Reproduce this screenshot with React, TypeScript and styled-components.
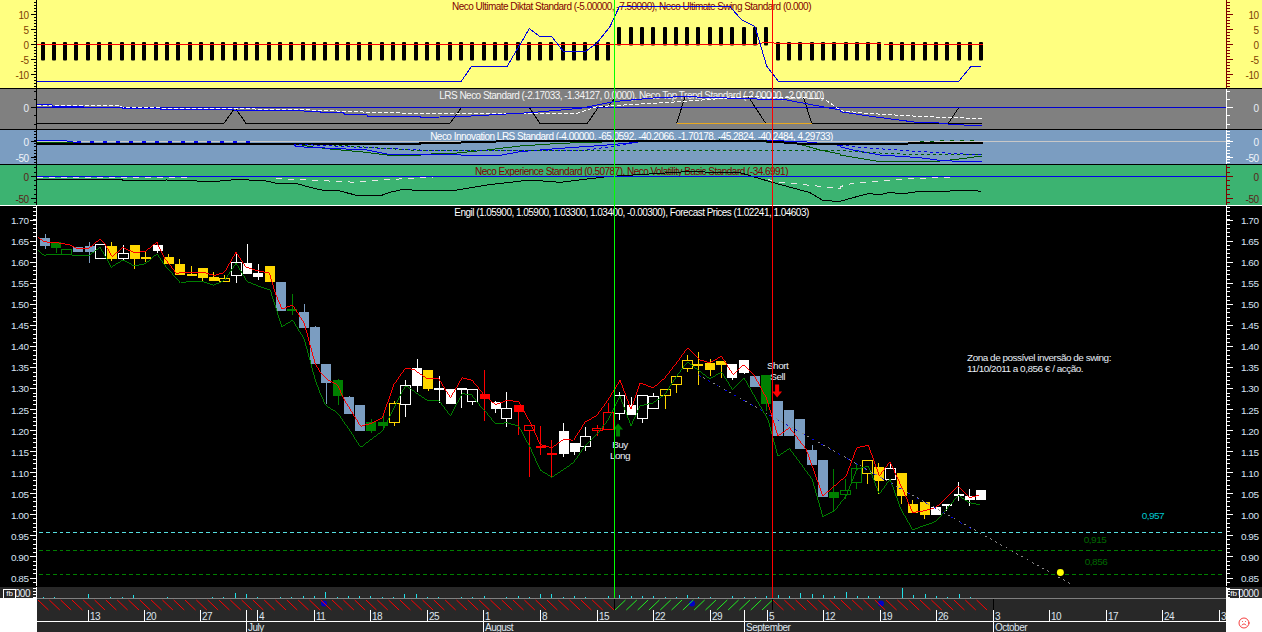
import React from "react";
import styled, { createGlobalStyle } from "styled-components";
import { Frown } from "lucide-react";

const YELLOW = "#ffff80";
const GRAY = "#808080";
const STEEL = "#7b9dc1";
const SEA = "#3cb371";
const GOLD = "#ffd700";
const DARK = "#282828";
const MAROON = "#800000";

const GlobalStyle = createGlobalStyle`
  html, body {
    margin: 0;
    padding: 0;
    background: #fff;
    overflow: hidden;
  }
  body {
    font-family: "Liberation Sans", Arial, sans-serif;
  }
`;

const Screen = styled.div`
  position: relative;
  width: 1262px;
  height: 632px;
  overflow: hidden;
`;

const Panel = styled.section<{ $height: number; $bg: string; $rule: string }>`
  display: grid;
  grid-template-columns: 37px 1189px 36px;
  box-sizing: border-box;
  height: ${(p) => p.$height}px;
  background: ${(p) => p.$bg};
  border-bottom: 1px solid ${(p) => p.$rule};
`;

const Plot = styled.div`
  position: relative;
  overflow: hidden;
`;

const Title = styled.div<{ $color: string }>`
  position: absolute;
  top: 1px;
  left: 0;
  right: 0;
  font-size: 10px;
  letter-spacing: -0.52px;
  line-height: 11px;
  text-align: center;
  white-space: nowrap;
  color: ${(p) => p.$color};
`;

const Canvas = styled.svg`
  position: relative;
  display: block;
  width: 100%;
  height: 100%;

  text {
    font-family: "Liberation Sans", Arial, sans-serif;
    font-size: 10px;
    letter-spacing: -0.5px;
  }
`;

const VLine = styled.div<{ $x: number; $color: string }>`
  position: absolute;
  top: 0;
  left: ${(p) => p.$x}px;
  width: 1px;
  height: 598px;
  background: ${(p) => p.$color};
`;

const VolumeRow = styled.div`
  display: grid;
  grid-template-columns: 37px 1189px 36px;
  height: 11px;
  background: ${DARK};
`;

const Gutter = styled.div`
  position: relative;
  overflow: hidden;
`;

const TinyBox = styled.span<{ $left: number }>`
  position: absolute;
  top: 2px;
  left: ${(p) => p.$left}px;
  width: 11px;
  height: 9px;
  border: 1px solid #fff;
  border-bottom: none;
  color: #fff;
  font-size: 8px;
  line-height: 8px;
  text-align: center;
`;

const TimeRow = styled.div`
  display: grid;
  grid-template-columns: 37px 1189px 36px;
  height: 34px;
  background: #fff;
`;

const TimePlot = styled.div`
  background: ${DARK};
`;

const SmileyCell = styled.div`
  display: flex;
  align-items: flex-end;
  justify-content: center;
  padding-bottom: 3px;
  color: #f00000;
`;

const trace = (ox: number, oy: number, ...v: number[]) => {
  const out: string[] = [];
  for (let n = 0; n < v.length; n += 2) out.push(`${ox + v[n] / 3},${oy + v[n + 1] / 3}`);
  return out.join(" ");
};

const barX = (i: number) => 42.5 + 11.31 * i;

type Tick = { y: number; label?: string };

const makeTicks = (from: number, to: number, start: number, step: number, majors: Tick[]) => {
  const minors: number[] = [];
  for (let y = start; y <= to; y += step) if (y >= from) minors.push(Math.floor(y) + 0.5);
  return { minors, majors };
};

const ValueAxis = ({
  side,
  top,
  height,
  line,
  ink,
  ticks,
}: {
  side: "left" | "right";
  top: number;
  height: number;
  line: string;
  ink: string;
  ticks: { minors: number[]; majors: Tick[] };
}) => {
  const left = side === "left";
  const base = left ? 36.5 : 1226.5;
  const dir = left ? -1 : 1;
  return (
    <Canvas viewBox={`${left ? 0 : 1226} ${top} ${left ? 37 : 36} ${height}`} shapeRendering="crispEdges">
      <line x1={base} x2={base} y1={top} y2={top + height} stroke={line} />
      {ticks.minors.map((y) => (
        <line key={y} x1={base} x2={base + dir * 3} y1={y} y2={y} stroke={line} />
      ))}
      {ticks.majors.map((t) => (
        <line key={t.y} x1={base} x2={base + dir * 6} y1={t.y} y2={t.y} stroke={line} />
      ))}
      {ticks.majors.map((t) => (
        <text key={t.y} x={left ? 28.5 : 1258.5} y={t.y + 4} fill={ink} textAnchor="end">
          {t.label}
        </text>
      ))}
    </Canvas>
  );
};

const ultimateBars = Array.from({ length: 84 }, (_, i) => i);
const swingLine = [
  trace(0, 0, 110, 244),
  trace(420, 0, 124, 244, 155, 198, 262, 198, 328, 86, 358, 108, 394, 108, 430, 154, 497, 154, 530, 130, 570, 80, 598, 20, 930, 20, 965, 60, 1005, 80, 1040, 198, 1075, 244),
  trace(840, 0, 356, 244, 392, 200, 422, 200),
].join(" ");

const UltimatePlot = () => (
  <Canvas viewBox="37 0 1189 88">
    {ultimateBars.map((i) => {
      const up = i >= 51 && i <= 64;
      return <rect key={i} x={Math.round(barX(i)) - 2} y={up ? 27 : 42} width={4} height={18.5} rx={1} fill="#000" />;
    })}
    <polyline
      points="37,44.5 756,44.5 762,43 770,42.5 778,43.5 983,44.5"
      fill="none"
      stroke="#f00"
      shapeRendering="crispEdges"
    />
    <polyline points={swingLine} fill="none" stroke="#0000e0" shapeRendering="crispEdges" />
  </Canvas>
);

const LrsPlot = () => (
  <Canvas viewBox="37 89 1189 40" fill="none" shapeRendering="crispEdges">
    <polyline
      stroke="#000"
      points={[
        trace(0, 0, 110, 370, 672, 370, 705, 323, 738, 370),
        trace(420, 0, 90, 370, 125, 322, 328, 322, 360, 370, 502, 370, 535, 322, 565, 318, 585, 295),
      ].join(" ")}
    />
    <polyline stroke="#000" points={trace(420, 0, 770, 370, 795, 290)} />
    <polyline stroke="#000" points={trace(420, 0, 985, 290, 1037, 370)} />
    <polyline stroke="#000" points={[trace(420, 0, 1150, 290, 1175, 370), trace(840, 0, 325, 370, 425, 370)].join(" ")} />
    <polyline stroke="#000" points={trace(840, 0, 325, 370, 357, 322, 425, 322)} />
    <line x1={37} x2={1226} y1={107.5} y2={107.5} stroke="#0000d0" />
    <line x1={677} x2={812} y1={123.5} y2={123.5} stroke="#e8a820" />
    <polyline
      stroke="#fff"
      strokeDasharray="4 2"
      points={[
        trace(0, 0, 110, 316, 350, 316, 370, 323, 690, 326, 910, 329, 1140, 338, 1260, 340),
        trace(420, 0, 0, 340, 470, 340, 530, 320, 780, 305, 980, 290, 1210, 295, 1260, 330),
        trace(840, 0, 0, 332, 80, 340, 200, 347, 320, 353, 425, 355),
      ].join(" ")}
    />
    <polyline
      stroke="#0000f0"
      points={[
        trace(0, 0, 110, 314, 155, 314, 158, 318, 250, 318, 253, 322, 365, 322, 368, 325, 480, 325, 483, 328, 700, 328, 703, 331, 910, 331, 913, 335, 960, 335, 963, 338, 1030, 338, 1033, 342, 1100, 342, 1103, 349, 1260, 349),
        trace(420, 0, 0, 352, 120, 350, 330, 338, 480, 325, 580, 305, 720, 292, 800, 290, 1100, 300, 1260, 330),
        trace(840, 0, 0, 335, 100, 350, 230, 367, 280, 367, 325, 372, 370, 372, 372, 375, 425, 377),
      ].join(" ")}
    />
  </Canvas>
);

const InnovationPlot = () => (
  <Canvas viewBox="37 130 1189 34" fill="none" shapeRendering="crispEdges">
    <line x1={37} x2={1226} y1={141.5} y2={141.5} stroke="#c8c8c8" />
    <polyline
      stroke="#005a00"
      points={[
        trace(0, 0, 110, 428, 560, 432, 880, 430, 930, 440, 1000, 448, 1090, 456, 1170, 466, 1260, 466),
        trace(420, 0, 0, 463, 100, 460, 200, 450, 300, 438, 420, 430, 580, 425, 900, 420, 1130, 430, 1200, 450, 1260, 462),
        trace(840, 0, 0, 465, 60, 475, 120, 485, 280, 485, 350, 478, 425, 468),
      ].join(" ")}
    />
    <polyline
      stroke="#0000e8"
      points={[
        trace(0, 0, 560, 432, 570, 434, 880, 434, 890, 440, 1100, 450, 1170, 464, 1260, 464),
        trace(420, 0, 0, 464, 240, 466, 300, 455, 420, 445, 550, 436, 640, 428, 680, 420, 1000, 420, 1150, 425, 1260, 436),
        trace(840, 0, 0, 440, 40, 450, 120, 465, 240, 473, 290, 480, 350, 484, 425, 485),
      ].join(" ")}
    />
    <polyline stroke="#0000e8" points={trace(0, 0, 110, 421, 200, 423, 230, 428)} />
    <polyline stroke="#0000e8" strokeWidth={2} strokeDasharray="4 9" points={trace(0, 0, 230, 427, 760, 427)} />
    <polyline
      stroke="#000"
      strokeWidth={2}
      points={[
        trace(0, 0, 110, 431, 1260, 431),
        trace(420, 0, 0, 430, 105, 430, 140, 425, 700, 422, 1000, 422, 1100, 428, 1150, 432),
        trace(840, 0, 0, 433, 200, 432, 210, 429, 428, 428),
      ].join(" ")}
    />
    <polyline
      stroke="#0000e8"
      strokeDasharray="3 3"
      points={[
        trace(0, 0, 880, 432, 1040, 440, 1260, 450),
        trace(420, 0, 0, 450, 500, 450, 640, 430, 660, 425),
      ].join(" ")}
    />
    <polyline stroke="#0000e8" strokeDasharray="3 3" points={trace(840, 0, 0, 435, 60, 442, 200, 452, 300, 458, 425, 465)} />
    <polyline
      stroke="#005a00"
      strokeDasharray="3 3"
      points={[trace(0, 0, 1000, 435, 1260, 452), trace(840, 0, 0, 452, 100, 458, 200, 463, 425, 465)].join(" ")}
    />
    <polyline stroke="#005a00" strokeDasharray="4 6" points={trace(840, 0, 240, 424, 410, 421)} />
  </Canvas>
);

const ExperiencePlot = () => (
  <Canvas viewBox="37 165 1189 40" fill="none" shapeRendering="crispEdges">
    <polyline
      stroke="#000"
      points={[
        trace(0, 0, 110, 539, 365, 539, 370, 541, 430, 541, 500, 540, 620, 544, 650, 544, 705, 539, 790, 541, 835, 551, 890, 551, 950, 567, 975, 572, 1015, 572, 1070, 586, 1145, 586, 1170, 577, 1210, 568, 1260, 572),
        trace(420, 0, 0, 572, 100, 572, 200, 555, 330, 540, 420, 547, 560, 530, 800, 515, 960, 518, 1060, 548, 1170, 578, 1210, 602, 1260, 604),
        trace(840, 0, 0, 604, 50, 590, 90, 580, 115, 585, 150, 577, 185, 582, 225, 576, 310, 575, 350, 571, 400, 571, 422, 574),
      ].join(" ")}
    />
    <polyline
      stroke="#e8e8e8"
      strokeDasharray="6 6"
      points={[
        trace(0, 0, 110, 533, 810, 530, 820, 535, 1070, 547, 1150, 540, 1260, 533),
        trace(420, 0, 0, 533, 60, 530, 1030, 530, 1060, 545, 1260, 565),
        trace(840, 0, 0, 560, 30, 552, 100, 545, 230, 535, 340, 531, 410, 528),
      ].join(" ")}
    />
    <line x1={37} x2={1226} y1={176.5} y2={176.5} stroke="#0000e8" />
  </Canvas>
);

// body top, body bottom, wick top, wick bottom, traced off the 3x crops
type Row = [string, number, number, number?, number?];

const candlesA: Row[] = [
  ["b", 85, 108, 72, 118], ["g", 97, 114, 97, 130], ["go", 118, 131], ["b", 112, 126], ["b", 108, 126, 97, 158],
  ["wo", 103, 145], ["y", 108, 146, 97, 152], ["wo", 130, 143, 106, 150], ["y", 105, 146, 105, 177], ["y", 141, 146, 126, 155],
  ["w", 105, 122, 105, 130], ["y", 141, 162, 133, 162], ["y", 162, 195, 148, 195], ["y", 191, 197, 168, 197], ["y", 175, 204, 175, 213],
  ["y", 201, 212, 186, 212], ["yo", 204, 212, 196, 212], ["wo", 157, 196, 133, 221], ["w", 160, 193, 102, 193], ["w", 189, 201, 162, 212],
  ["y", 168, 216], ["b", 216, 303], ["g", 297, 302, 252, 315], ["b", 306, 354, 282, 354], ["b", 351, 462, 348, 462],
];

const candlesB: Row[] = [
  ["b", 72, 129, 72, 195], ["g", 120, 168, 117, 198], ["b", 174, 225, 168, 225], ["b", 198, 276], ["g", 249, 276, 240, 282],
  ["g", 249, 261, 225, 273], ["yo", 192, 249, 186, 261], ["wo", 135, 195, 120, 234], ["w", 84, 138, 57, 156], ["y", 90, 147, 90, 153],
  ["w", 145, 147, 108, 192], ["w", 147, 195], ["w", 145, 150, 145, 207], ["wo", 147, 186, 147, 198], ["r", 162, 180, 90, 246],
  ["w", 189, 210, 186, 222], ["wo", 207, 237, 156, 264], ["r", 198, 219, 198, 288], ["ro", 258, 274, 258, 414], ["r", 322, 326, 261, 348],
  ["r", 342, 347, 303, 414], ["w", 276, 345, 252, 354], ["w", 312, 339, 312, 348], ["wo", 291, 322, 264, 336], ["ro", 267, 274, 258, 291],
  ["ro", 219, 269, 190, 269], ["wo", 165, 221, 156, 243], ["w", 198, 228, 174, 228], ["wo", 165, 237, 165, 252],
];

const candlesC: Row[] = [
  ["wo", 171, 207, 159, 207], ["yo", 147, 165, 147, 210], ["yo", 108, 132, 108, 159], ["yo", 60, 84, 45, 96], ["y", 72, 78, 36, 135],
  ["y", 69, 90, 57, 108], ["y", 63, 75, 63, 114], ["w", 72, 114, 72, 120], ["w", 60, 99, 60, 102], ["b", 108, 141],
  ["g", 105, 195, 105, 216], ["b", 186, 291], ["b", 213, 291], ["b", 240, 330], ["b", 333, 378, 318, 378],
  ["b", 363, 474], ["g", 459, 477, 390, 516], ["go", 453, 465, 420, 480], ["go", 387, 429, 375, 450], ["yo", 363, 402, 363, 435],
  ["y", 384, 426, 372, 465], ["wo", 387, 420, 375, 420], ["y", 402, 471, 402, 495], ["y", 495, 522, 483, 522], ["y", 489, 528, 489, 540],
  ["w", 504, 528], ["w", 495, 501, 495, 516], ["w", 465, 470, 429, 486], ["w", 471, 483, 450, 501], ["w", 453, 483],
];

const inks: Record<string, string> = { b: STEEL, g: "#008000", y: GOLD, w: "#fff", r: "#f00" };

const candles = [
  ...candlesA.map((r) => ({ r, oy: 210 })),
  ...candlesB.map((r) => ({ r, oy: 340 })),
  ...candlesC.map((r) => ({ r, oy: 340 })),
];

const Candle = ({ i, row, oy }: { i: number; row: Row; oy: number }) => {
  const [kind, top, bottom, wickTop = top, wickBottom = bottom] = row;
  const ink = inks[kind[0]];
  const hollow = kind.length > 1;
  const cx = Math.round(barX(i));
  const y1 = Math.round(oy + top / 3);
  const y2 = Math.round(oy + bottom / 3);
  return (
    <g>
      <line x1={cx + 0.5} x2={cx + 0.5} y1={oy + wickTop / 3} y2={oy + wickBottom / 3} stroke={ink} />
      {hollow ? (
        <rect x={cx - 4.5} y={y1 + 0.5} width={10} height={Math.max(y2 - y1, 1)} fill="#000" stroke={ink} />
      ) : (
        <rect x={cx - 4.5} y={y1} width={10} height={Math.max(y2 - y1, 2)} fill={ink} />
      )}
    </g>
  );
};

const upperBand = [
  trace(0, 210, 110, 82, 127, 96, 160, 97, 205, 105, 225, 115, 262, 116, 280, 100, 296, 88, 312, 105, 332, 140, 365, 113, 398, 128, 432, 125, 467, 97, 490, 145, 525, 190, 560, 188, 605, 187, 640, 197, 670, 188, 705, 127, 735, 172, 770, 183, 805, 190, 825, 255, 843, 298, 875, 286, 910, 340, 943, 462, 960, 490),
  trace(320, 340, 20, 120, 50, 135, 70, 180, 120, 261, 150, 252, 185, 235, 220, 135, 255, 85, 280, 90, 320, 118, 355, 118, 390, 175, 425, 115, 455, 122, 490, 165, 525, 195, 560, 183, 595, 186, 630, 250, 660, 315, 695, 325, 730, 300, 760, 303, 795, 248, 830, 228, 865, 180, 900, 122, 933, 210),
  trace(640, 340, 0, 130, 40, 145, 75, 115, 110, 70, 143, 25, 178, 60, 210, 70, 245, 50, 280, 105, 313, 75, 345, 110, 380, 175, 415, 290, 450, 265, 500, 330, 550, 470, 620, 410, 652, 325, 687, 318, 720, 410, 752, 367, 790, 450, 820, 520, 855, 515, 890, 505, 958, 440, 990, 475, 1020, 468),
].join(" ");

const lowerBand = [
  trace(0, 210, 110, 122, 127, 136, 160, 133, 205, 135, 262, 138, 296, 112, 330, 172, 365, 150, 398, 168, 432, 162, 467, 132, 490, 165, 538, 220, 568, 214, 605, 215, 638, 226, 670, 212, 705, 160, 738, 215, 770, 228, 808, 241, 843, 352, 875, 331, 910, 388, 943, 510, 960, 556),
  trace(320, 340, 15, 198, 50, 220, 85, 270, 120, 324, 185, 275, 220, 205, 255, 138, 320, 183, 355, 183, 390, 229, 425, 163, 455, 165, 490, 210, 525, 253, 560, 250, 595, 260, 630, 325, 660, 392, 695, 414, 760, 370, 795, 320, 830, 285, 865, 240, 900, 170, 933, 259),
  trace(640, 340, 0, 200, 40, 190, 75, 165, 110, 110, 143, 67, 210, 118, 245, 97, 278, 150, 313, 115, 350, 180, 385, 240, 415, 350, 450, 328, 518, 420, 550, 533, 585, 515, 620, 470, 652, 390, 687, 380, 720, 465, 752, 420, 785, 510, 820, 572, 890, 547, 958, 468, 990, 490, 1022, 497),
].join(" ");

const Note = ({ x, y, anchor, ink = "#e8eef6", children }: { x: number; y: number; anchor?: "middle"; ink?: string; children: string }) => (
  <text x={x} y={y} fill={ink} textAnchor={anchor}>
    {children}
  </text>
);

const PricePlot = () => (
  <Canvas viewBox="37 206 1189 381" fill="none">
    <g shapeRendering="crispEdges">
      {candles.map((c, i) => (
        <Candle key={i} i={i} row={c.r} oy={c.oy} />
      ))}
      <polyline points={lowerBand} stroke="#008000" />
      <polyline points={upperBand} stroke="#f00" />
      <line x1={698} y1={375} x2={1072} y2={585} stroke="#8a8a8a" strokeDasharray="2 4" />
      <line x1={699.5} y1={376} x2={975} y2={531} stroke="#0000e8" strokeDasharray="2 8" />
      <line x1={37} x2={1226} y1={533.5} y2={533.5} stroke="#55dfe0" strokeDasharray="4 3" />
      <line x1={37} x2={1226} y1={551.5} y2={551.5} stroke="#008000" strokeDasharray="4 3" />
      <line x1={37} x2={1226} y1={575.5} y2={575.5} stroke="#008000" strokeDasharray="4 3" />
    </g>
    <path d="M618 424l5 6h-3v7h-4v-7h-3z" fill="#008000" />
    <path d="M775.500 385h4v7h3l-5 6-5-6h3z" fill="#f00" />
    <circle cx={1061.5} cy={573.5} r={3.5} fill="#ffff00" />
    <Note x={620} y={449} anchor="middle">Buy</Note>
    <Note x={620} y={460} anchor="middle">Long</Note>
    <Note x={778} y={369} anchor="middle">Short</Note>
    <Note x={778} y={380} anchor="middle">Sell</Note>
    <Note x={968} y={361}>Zona de possível inversão de swing:</Note>
    <Note x={968} y={372}>11/10/2011 a 0,856 € / acção.</Note>
    <Note x={1143} y={520} ink="#00c8d0">0,957</Note>
    <Note x={1085} y={544} ink="#006800">0,915</Note>
    <Note x={1086} y={566} ink="#006800">0,856</Note>
  </Canvas>
);

const volumes: Record<number, number> = {
  0: 1, 1: 1, 4: 4, 6: 1, 7: 1, 8: 3, 11: 1, 15: 1, 16: 1, 17: 5, 18: 4, 19: 1, 21: 1, 22: 1, 23: 2, 24: 2, 25: 6, 26: 1, 27: 2, 28: 2, 29: 2, 30: 1, 31: 1, 32: 4, 33: 4,
  34: 1, 35: 1, 37: 1, 38: 1, 39: 2, 41: 1, 42: 2, 43: 1, 44: 4, 45: 4, 46: 1, 47: 2, 48: 1, 50: 2, 51: 3, 52: 2, 53: 2, 54: 2, 55: 1, 56: 1, 57: 3, 58: 1, 59: 1, 61: 2, 62: 1, 63: 1, 64: 2, 65: 3, 66: 2, 67: 5, 68: 4, 69: 3, 70: 2,
  71: 6, 72: 2, 73: 2, 74: 2, 76: 10, 77: 3, 78: 4, 79: 2, 80: 1, 81: 4, 82: 1,
};

const VolumePlot = () => (
  <Canvas viewBox="37 587 1189 11" shapeRendering="crispEdges">
    {Object.entries(volumes).map(([i, h]) => {
      const x = Math.round(barX(Number(i))) + 0.5;
      return <line key={i} x1={x} x2={x} y1={598} y2={598 - h} stroke="#20e0e8" />;
    })}
  </Canvas>
);

const GutterScale = ({ left, value }: { left: boolean; value: string }) => (
  <Canvas viewBox={`${left ? 0 : 1226} 587 ${left ? 37 : 36} 11`} shapeRendering="crispEdges">
    <line x1={left ? 36.5 : 1226.5} x2={left ? 36.5 : 1226.5} y1={587} y2={598} stroke="#fff" />
    {[588.5, 591.5, 594.5, 597.5].map((y) => (
      <line key={y} x1={left ? 33 : 1227} x2={left ? 36 : 1230} y1={y} y2={y} stroke="#fff" />
    ))}
    <text x={left ? 30 : 1258.5} y={597} fill="#e8eef6" textAnchor="end">
      {value}
    </text>
  </Canvas>
);

const days = [
  [88, "13"], [144, "20"], [200, "27"], [257, "4"], [314, "11"], [370, "18"], [427, "25"], [483, "1"], [540, "8"], [597, "15"], [653, "22"],
  [710, "29"], [767, "5"], [823, "12"], [880, "19"], [936, "26"], [993, "3"], [1049, "10"], [1106, "17"], [1162, "24"], [1219, "31"],
] as const;

const months = [[246, "July"], [483, "August"], [744, "September"], [993, "October"]] as const;

const hatchRanges = [
  { from: 38, to: 614, ink: "#ff0000", rising: false },
  { from: 615, to: 772, ink: "#20f020", rising: true },
  { from: 773, to: 993, ink: "#ff0000", rising: false },
];

const TimePlotArt = () => (
  <Canvas viewBox="37 598 1189 34">
    <line x1={37} x2={1226} y1={598.5} y2={598.5} stroke="#808080" />
    {[324, 692, 881].map((x) => (
      <circle key={x} cx={x} cy={603.5} r={3} fill="#0000c8" />
    ))}
    {hatchRanges.map((h) => {
      const out = [];
      for (let x = h.from; x + 10 <= h.to + 1; x += 11.31) {
        out.push(
          <line key={x} x1={x} x2={x + 10.5} y1={h.rising ? 610 : 600} y2={h.rising ? 600 : 610} stroke={h.ink} />
        );
      }
      return out;
    })}
    {[614.5, 772.5, 993.5].map((x) => (
      <line key={x} x1={x} x2={x} y1={599} y2={610} stroke="#000" />
    ))}
    <text x={30} y={619.5} fill="#d8b890">6</text>
    {days.map(([x, d]) => (
      <g key={x}>
        <line x1={x + 0.5} x2={x + 0.5} y1={610} y2={621} stroke="#fff" />
        <text x={x + 2} y={619.5} fill="#dde4ec">{d}</text>
      </g>
    ))}
    <line x1={37} x2={1226} y1={621.5} y2={621.5} stroke="#fff" />
    {months.map(([x, m]) => (
      <g key={m}>
        <line x1={x + 0.5} x2={x + 0.5} y1={610} y2={632} stroke="#fff" />
        <text x={x + 2} y={631} fill="#dde4ec">{m}</text>
      </g>
    ))}
  </Canvas>
);

const chartMajors: Tick[] = Array.from({ length: 18 }, (_, k) => ({
  y: Math.floor(220 + 21.12 * k) + 0.5,
  label: (1.7 - k * 0.05).toFixed(2),
}));

const scales = {
  ultimate: makeTicks(0, 88, 2, 3, [
    { y: 14.5, label: "10" },
    { y: 29.5, label: "5" },
    { y: 44.5, label: "0" },
    { y: 59.5, label: "-5" },
    { y: 74.5, label: "-10" },
  ]),
  lrs: makeTicks(89, 129, 91, 8.3, [{ y: 107.5, label: "0" }]),
  innovation: makeTicks(130, 164, 131, 3.2, [
    { y: 141.5, label: "0" },
    { y: 157.5, label: "-50" },
  ]),
  experience: makeTicks(165, 205, 167.7, 4.4, [
    { y: 176.5, label: "0" },
    { y: 198.5, label: "-50" },
  ]),
  price: makeTicks(206, 587, 207.3, 4.224, chartMajors),
};

const App = () => (
  <Screen>
    <GlobalStyle />
    <Panel $height={89} $bg={YELLOW} $rule="#000">
      <ValueAxis side="left" top={0} height={88} line="#000" ink="#804000" ticks={scales.ultimate} />
      <Plot>
        <Title $color={MAROON}>Neco Ultimate Diktat Standard (-5.00000, -7.50000), Neco Ultimate Swing Standard (0.000)</Title>
        <UltimatePlot />
      </Plot>
      <ValueAxis side="right" top={0} height={88} line={MAROON} ink="#804000" ticks={scales.ultimate} />
    </Panel>
    <Panel $height={41} $bg={GRAY} $rule="#000">
      <ValueAxis side="left" top={89} height={40} line="#000" ink="#e8eef6" ticks={scales.lrs} />
      <Plot>
        <Title $color="#f4f4f4">LRS Neco Standard (-2.17033, -1.34127, 0.0000), Neco Top Trend Standard (-2.00000, -2.00000)</Title>
        <LrsPlot />
      </Plot>
      <ValueAxis side="right" top={89} height={40} line="#fff" ink="#e8eef6" ticks={scales.lrs} />
    </Panel>
    <Panel $height={35} $bg={STEEL} $rule="#000">
      <ValueAxis side="left" top={130} height={34} line="#000" ink="#f0f4fa" ticks={scales.innovation} />
      <Plot>
        <Title $color="#fff">Neco Innovation LRS Standard (-4.00000, -65.0592, -40.2066, -1.70178, -45.2824, -40.2484, 4.29733)</Title>
        <InnovationPlot />
      </Plot>
      <ValueAxis side="right" top={130} height={34} line="#fff" ink="#f0f4fa" ticks={scales.innovation} />
    </Panel>
    <Panel $height={41} $bg={SEA} $rule="#fff">
      <ValueAxis side="left" top={165} height={40} line="#000" ink="#5a2418" ticks={scales.experience} />
      <Plot>
        <Title $color={MAROON}>Neco Experience Standard (0.50787), Neco Volatility Basic Standard (-34.6991)</Title>
        <ExperiencePlot />
      </Plot>
      <ValueAxis side="right" top={165} height={40} line={MAROON} ink="#5a2418" ticks={scales.experience} />
    </Panel>
    <Panel $height={381} $bg="#000" $rule="#000">
      <ValueAxis side="left" top={206} height={381} line="#fff" ink="#d8e4f4" ticks={scales.price} />
      <Plot>
        <Title $color="#fff">Engil (1.05900, 1.05900, 1.03300, 1.03400, -0.00300), Forecast Prices (1.02241, 1.04603)</Title>
        <PricePlot />
      </Plot>
      <ValueAxis side="right" top={206} height={381} line="#fff" ink="#d8e4f4" ticks={scales.price} />
    </Panel>
    <VolumeRow>
      <Gutter>
        <GutterScale left value="000" />
        <TinyBox $left={3}>fb</TinyBox>
      </Gutter>
      <VolumePlot />
      <Gutter>
        <GutterScale left={false} value="0000" />
        <TinyBox $left={1}>fb</TinyBox>
      </Gutter>
    </VolumeRow>
    <TimeRow>
      <div />
      <TimePlot>
        <TimePlotArt />
      </TimePlot>
      <SmileyCell>
        <Frown size={12} strokeWidth={1.5} />
      </SmileyCell>
    </TimeRow>
    <VLine $x={614} $color="#00ff00" />
    <VLine $x={772} $color="#ff0000" />
  </Screen>
);

export default App;
